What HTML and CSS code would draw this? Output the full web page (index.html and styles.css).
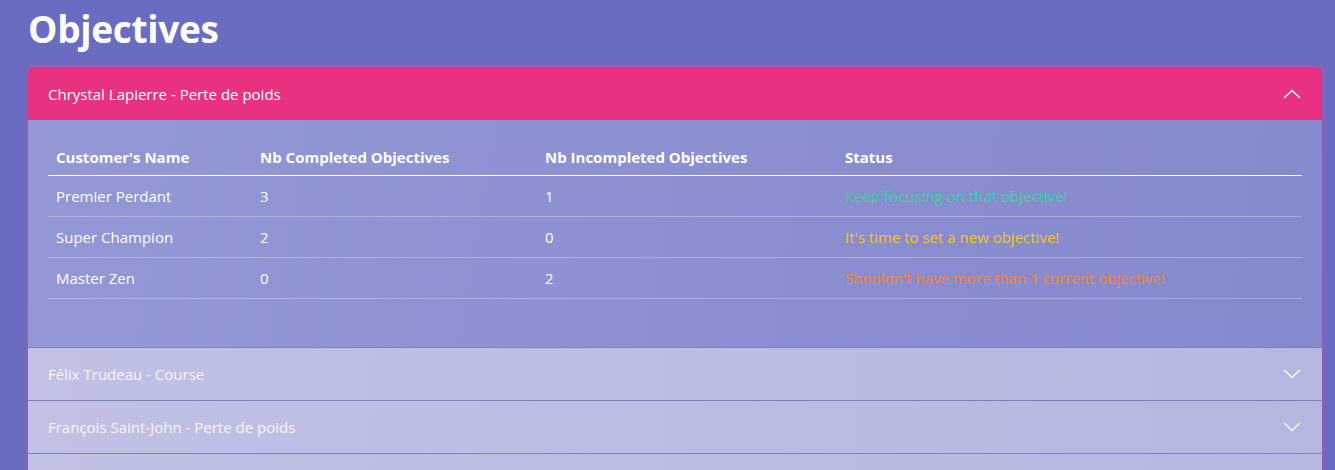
FILE: index.html
```html
<!DOCTYPE html>
<html lang="en">
<head>
<meta charset="utf-8">
<title>Objectives</title>
<link rel="stylesheet" href="styles.css">
</head>
<body>
<main class="page">
  <h1 class="title">Objectives</h1>
  <section class="accordion">
    <div class="item open">
      <div class="item-header">
        <span class="item-title">Chrystal Lapierre - Perte de poids</span>
        <svg class="chev" width="18" height="10" viewBox="0 0 18 10"><path d="M1 9 L9 1.5 L17 9" fill="none" stroke="#fff" stroke-width="1.4"/></svg>
      </div>
      <div class="item-body">
        <table class="obj-table">
          <thead>
            <tr>
              <th class="c1">Customer's Name</th>
              <th class="c2">Nb Completed Objectives</th>
              <th class="c3">Nb Incompleted Objectives</th>
              <th class="c4">Status</th>
            </tr>
          </thead>
          <tbody>
            <tr><td>Premier Perdant</td><td>3</td><td>1</td><td class="st-green">Keep focusing on that objective!</td></tr>
            <tr><td>Super Champion</td><td>2</td><td>0</td><td class="st-yellow">It's time to set a new objective!</td></tr>
            <tr><td>Master Zen</td><td>0</td><td>2</td><td class="st-orange">Shouldn't have more than 1 current objective!</td></tr>
          </tbody>
        </table>
      </div>
    </div>
    <div class="item closed">
      <div class="item-header">
        <span class="item-title">Félix Trudeau - Course</span>
        <svg class="chev" width="18" height="10" viewBox="0 0 18 10"><path d="M1 1 L9 8.5 L17 1" fill="none" stroke="#fff" stroke-width="1.4"/></svg>
      </div>
    </div>
    <div class="item closed">
      <div class="item-header">
        <span class="item-title">François Saint-John - Perte de poids</span>
        <svg class="chev" width="18" height="10" viewBox="0 0 18 10"><path d="M1 1 L9 8.5 L17 1" fill="none" stroke="#fff" stroke-width="1.4"/></svg>
      </div>
    </div>
    <div class="item closed">
      <div class="item-header">
        <span class="item-title">&nbsp;</span>
      </div>
    </div>
  </section>
</main>
</body>
</html>
```
FILE: styles.css
```css
html, body {
  margin: 0;
  padding: 0;
}
body {
  background: #6a6cc2;
  font-family: "Open Sans", "Noto Sans", sans-serif;
  color: #fff;
  height: 470px;
  overflow: hidden;
}
.page {
  padding: 0 13px 0 28px;
}
.title {
  margin: 0;
  padding-top: 6px;
  height: 61px;
  font-size: 37px;
  font-weight: 700;
  line-height: 46px;
  letter-spacing: -0.3px;
}
.accordion {
  border-radius: 6px 6px 0 0;
  box-shadow: 0 0 4px 2px rgba(190, 80, 170, 0.45);
}
.item-header {
  display: flex;
  align-items: center;
  justify-content: space-between;
  padding: 0 21px 0 20px;
  font-size: 15px;
}
.open .item-header {
  background: #e8327f;
  height: 53px;
  border-radius: 6px 6px 0 0;
}
.closed .item-header {
  background: linear-gradient(100deg, #c0c1e5 0%, #b5b7e1 100%);
  height: 52px;
  border-bottom: 1px solid #7d7fc3;
}
.closed .item-title {
  color: #f7f7fc;
}
.item-body {
  background: linear-gradient(100deg, #9398d5 0%, #8488cd 100%);
  padding: 22px 20px 48px 20px;
  border-bottom: 1px solid #7d7fc3;
}
.obj-table {
  width: 100%;
  border-collapse: collapse;
  font-size: 15px;
}
.obj-table th {
  text-align: left;
  font-weight: 700;
  padding: 5px 8px 8px 8px;
  height: 20px;
  border-bottom: 1.5px solid #ffffff;
}
.obj-table td {
  padding: 0 8px;
  height: 40px;
  border-bottom: 1px solid rgba(255, 255, 255, 0.28);
}
.c1 { width: 188px; }
.c2 { width: 269px; }
.c3 { width: 284px; }
.st-green { color: #35d49d; }
.st-yellow { color: #f7c41a; }
.st-orange { color: #fd7f2a; }
.chev {
  display: block;
}
```
